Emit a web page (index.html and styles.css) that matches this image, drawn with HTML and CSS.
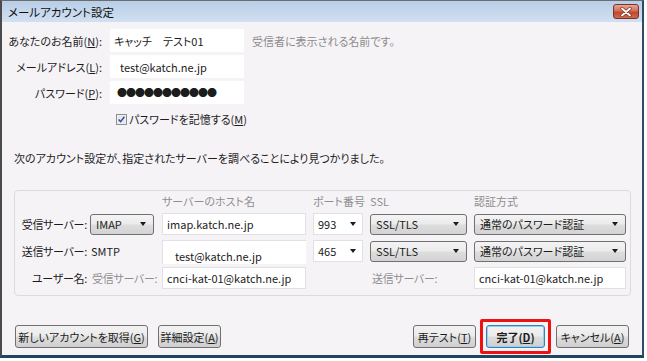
FILE: index.html
```html
<!DOCTYPE html>
<html lang="ja">
<head>
<meta charset="utf-8">
<title>メールアカウント設定</title>
<link rel="stylesheet" href="styles.css">
</head>
<body>
<div class="window">
  <div class="titlebar">
    <span class="title">メールアカウント設定</span>
    <span class="close">
      <svg width="12" height="10" viewBox="0 0 12 10"><path d="M2 1.5 L10 8.5 M10 1.5 L2 8.5" stroke="#7a3020" stroke-width="3.2" stroke-linecap="round"/><path d="M2 1.5 L10 8.5 M10 1.5 L2 8.5" stroke="#ffffff" stroke-width="1.8" stroke-linecap="round"/></svg>
    </span>
  </div>
  <div class="content">
    <div class="identity">
      <label class="lbl">あなたのお名前(<u>N</u>):</label>
      <div class="field">キャッチ　テスト01</div>
      <div class="hint">受信者に表示される名前です。</div>
      <label class="lbl">メールアドレス(<u>L</u>):</label>
      <div class="field field-pasted">test@katch.ne.jp</div>
      <div></div>
      <label class="lbl">パスワード(<u>P</u>):</label>
      <div class="field dots">●●●●●●●●●●●</div>
      <div></div>
      <div></div>
      <div class="remember">
        <svg class="checkbox" width="11" height="11" viewBox="0 0 11 11"><rect x="0.5" y="0.5" width="10" height="10" fill="#f4f4f6" stroke="#8e8f8f"/><rect x="1.5" y="1.5" width="8" height="8" fill="#e6e8ee"/><path d="M2.6 5.4 L4.6 7.6 L8.4 2.8" fill="none" stroke="#3a4d8f" stroke-width="1.5"/></svg>
        <span>パスワードを記憶する(<u>M</u>)</span>
      </div>
    </div>

    <p class="message">次のアカウント設定が、指定されたサーバーを調べることにより見つかりました。</p>

    <div class="group">
      <div></div>
      <div></div>
      <div class="head">サーバーのホスト名</div>
      <div class="head">ポート番号</div>
      <div class="head">SSL</div>
      <div class="head">認証方式</div>

      <div class="glbl">受信サーバー:</div>
      <div class="select w-imap"><span>IMAP</span><i class="arrow"></i></div>
      <div class="input w-host">imap.katch.ne.jp</div>
      <div class="combo"><span>993</span><i class="arrow"></i></div>
      <div class="select w-ssl"><span>SSL/TLS</span><i class="arrow"></i></div>
      <div class="select w-auth"><span>通常のパスワード認証</span><i class="arrow"></i></div>

      <div class="glbl">送信サーバー:</div>
      <div class="plain">SMTP</div>
      <div class="input w-host input-pasted">test@katch.ne.jp</div>
      <div class="combo"><span>465</span><i class="arrow"></i></div>
      <div class="select w-ssl"><span>SSL/TLS</span><i class="arrow"></i></div>
      <div class="select w-auth"><span>通常のパスワード認証</span><i class="arrow"></i></div>

      <div class="glbl">ユーザー名:</div>
      <div class="sub">受信サーバー:</div>
      <div class="input w-host">cnci-kat-01@katch.ne.jp</div>
      <div></div>
      <div class="sub">送信サーバー:</div>
      <div class="input w-auth">cnci-kat-01@katch.ne.jp</div>
    </div>

    <div class="actions">
      <div class="btn-row">
        <button class="btn b-new">新しいアカウントを取得(<u>G</u>)</button>
        <button class="btn b-adv">詳細設定(<u>A</u>)</button>
      </div>
      <div class="btn-row">
        <button class="btn b-retest">再テスト(<u>T</u>)</button>
        <span class="highlight"><button class="btn btn-default b-done">完了(<u>D</u>)</button></span>
        <button class="btn b-cancel">キャンセル(<u>A</u>)</button>
      </div>
    </div>
  </div>
</div>
</body>
</html>
```

FILE: styles.css
```css
html, body {
  margin: 0;
  background: #ffffff;
}
body {
  font-family: "Noto Sans CJK JP", "Noto Sans", sans-serif;
  font-size: 11px;
  color: #1c1c1c;
  font-feature-settings: "palt";
}
u { text-decoration: underline; text-underline-offset: 1px; }

.window {
  width: 644px;
  height: 358px;
  box-sizing: border-box;
  border-top: 1px solid #6d6d6d;
  border-left: 2px solid #4b4b4b;
  border-right: 2px solid #2d4c68;
  border-bottom: 3px solid #1e4661;
  background: #f6f3f7;
  display: flex;
  flex-direction: column;
}

.titlebar {
  height: 21px;
  flex: none;
  background: linear-gradient(#b8cee7, #d1e0f1);
  display: flex;
  align-items: center;
  justify-content: space-between;
  padding: 0 3px 0 6px;
}
.title {
  font-size: 11.5px;
  color: #111;
}
.close {
  width: 26px;
  height: 15px;
  box-sizing: border-box;
  border: 1px solid #7b3326;
  border-radius: 3px;
  background: linear-gradient(#e8a594, #d36f58 45%, #c0482f 55%, #cf6a4c);
  display: flex;
  align-items: center;
  justify-content: center;
}

.content {
  flex: 1;
  display: flex;
  flex-direction: column;
}

/* identity form */
.identity {
  display: grid;
  grid-template-columns: 100px 134px auto;
  column-gap: 8px;
  row-gap: 3px;
  align-items: center;
  margin-top: 7px;
  white-space: nowrap;
}
.lbl {
  text-align: right;
  color: #1c1c1c;
}
.field {
  height: 23px;
  background: #ffffff;
  display: flex;
  align-items: center;
  padding-left: 4px;
  box-sizing: border-box;
}
.field-pasted { padding-left: 10px; }
.dots {
  font-size: 10px;
  letter-spacing: -1px;
  padding-left: 7px;
}
.hint { color: #8c8c8c; }
.remember {
  grid-column: 2 / 4;
  display: flex;
  align-items: center;
  gap: 2px;
  padding-left: 6px;
  margin-top: 4px;
  height: 16px;
}

.message {
  margin: 23px 0 0 12px;
  line-height: 16px;
  white-space: nowrap;
}

/* server group */
.group {
  margin: 24px 11px 0 12px;
  border: 1px solid #dcdadf;
  border-radius: 4px;
  padding: 2px 4px 6px 5px;
  display: grid;
  grid-template-columns: 70px 72px 151px 57px 104px 152px;
  grid-template-rows: 15px 22px 22px 22px;
  row-gap: 5px;
  align-items: center;
  white-space: nowrap;
}
.head { color: #8f8f8f; }
.glbl {
  text-align: right;
  padding-right: 3px;
  letter-spacing: -0.3px;
}
.sub { color: #8f8f8f; padding-left: 2px; letter-spacing: -0.3px; }
.plain { padding-left: 1px; }

.select {
  height: 21px;
  box-sizing: border-box;
  border: 1px solid #707070;
  border-radius: 3px;
  background: linear-gradient(#f4f4f4, #ebebeb 48%, #dddddd 52%, #d3d3d3);
  display: flex;
  align-items: center;
  justify-content: space-between;
  padding: 0 7px 0 5px;
}
.combo {
  width: 50px;
  height: 22px;
  box-sizing: border-box;
  border: 1px solid #e2e0e4;
  background: #ffffff;
  display: flex;
  align-items: center;
  justify-content: space-between;
  padding: 0 6px 0 4px;
}
.input {
  height: 22px;
  box-sizing: border-box;
  border: 1px solid #e2e0e4;
  background: #ffffff;
  display: flex;
  align-items: center;
  padding-left: 4px;
}
.input-pasted {
  align-items: flex-end;
  padding-left: 12px;
  padding-bottom: 0;
  height: 24px;
  align-self: start;
  border-right: none;
  border-bottom: none;
}
.w-imap { width: 64px; }
.w-host { width: 144px; }
.w-ssl { width: 97px; }
.w-auth { width: 152px; }

.arrow {
  width: 0;
  height: 0;
  border-left: 3.5px solid transparent;
  border-right: 3.5px solid transparent;
  border-top: 4px solid #1c1c1c;
}

/* buttons */
.actions {
  margin: 29px 13px 0 13px;
  display: flex;
  justify-content: space-between;
}
.btn-row {
  display: flex;
  gap: 10px;
  align-items: center;
}
.btn {
  height: 23px;
  box-sizing: border-box;
  border: 1px solid #707070;
  border-radius: 3px;
  background: linear-gradient(#f2f2f2, #ebebeb 48%, #dddddd 52%, #cfcfcf);
  font-family: inherit;
  font-size: 11px;
  font-feature-settings: "palt";
  color: #1c1c1c;
  padding: 0;
  white-space: nowrap;
}
.b-new { width: 133px; }
.b-adv { width: 63px; }
.b-retest { width: 63px; }
.b-done { width: 59px; }
.b-cancel { width: 73px; margin-left: 1px; }
.btn-default {
  display: block;
  border-color: #3c7fb1;
  box-shadow: inset 0 0 0 1px #8fd2f3;
  font-weight: bold;
}
.highlight {
  display: block;
  border: 3px solid #ee1111;
  border-radius: 2px;
  padding: 3px;
  margin: -6px -6px;
}
```
